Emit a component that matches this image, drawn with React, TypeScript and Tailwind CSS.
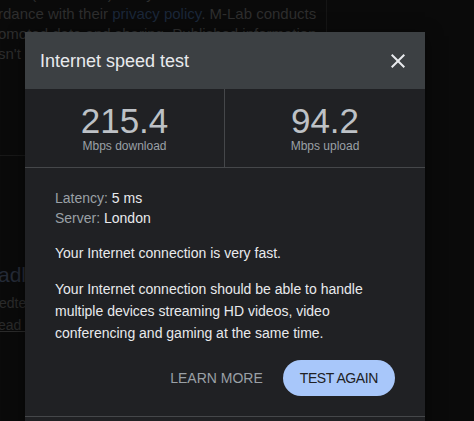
import React from "react";

const font = { fontFamily: '"Liberation Sans", Arial, sans-serif' };

export default function App() {
  return (
    <div
      className="relative h-[421px] w-[474px] overflow-hidden bg-[#0a0a0a]"
      style={font}
    >
      {/* background page */}
      <div className="w-[327px] h-[421px] border-r border-[#151515]">
        <div className="mt-[-16px] h-[172px] border-b border-[#181818] text-[15px] leading-5 text-[#2e2e2e] whitespace-nowrap">
          <div className="ml-[-2px]">data (IP address) and y</div>
          <div className="ml-[-2px]">
            rdance with their <span className="text-[#1b2739]">privacy policy</span>. M-Lab conducts
          </div>
          <div className="ml-[-2px]">omoted data and sharing. Published information</div>
          <div className="ml-[-2px]">sn't identify you</div>
        </div>
        <div className="mt-[105px] text-[21px] leading-[28px] text-[#252b37] whitespace-nowrap ml-[-2px]">
          adload speed
        </div>
        <div className="mt-[4px] text-[14px] leading-5 text-[#2b2b2b] whitespace-nowrap ml-[-1px]">
          edtest
        </div>
        <div className="mt-[2px] text-[14px] leading-5 text-[#2b2b2b] whitespace-nowrap ml-[-2px] underline">
          ead more
        </div>
      </div>

      {/* dialog */}
      <div className="absolute left-[25px] top-[32px] w-[400px] bg-[#202124] shadow-[0_4px_16px_rgba(0,0,0,0.5)]">
        <div className="flex h-[57px] items-center justify-between bg-[#3c4043] pl-[15px] pr-[15px]">
          <div className="text-[18px] leading-6 text-[#e8eaed]">Internet speed test</div>
          <button className="flex h-6 w-6 items-center justify-center text-[#e8eaed]">
            <svg viewBox="0 0 24 24" width="24" height="24" fill="currentColor">
              <path d="M19 6.41L17.59 5 12 10.59 6.41 5 5 6.41 10.59 12 5 17.59 6.41 19 12 13.41 17.59 19 19 17.59 13.41 12z" />
            </svg>
          </button>
        </div>

        <div className="grid grid-cols-2 border-b border-[#45474a]">
          <div className="flex flex-col items-center border-r border-[#45474a] pt-[15px] pb-[13px]">
            <div className="text-[35px] leading-[34px] text-[#bdc1c6]">215.4</div>
            <div className="text-[12px] leading-4 text-[#9aa0a6]">Mbps download</div>
          </div>
          <div className="flex flex-col items-center pt-[15px] pb-[13px]">
            <div className="text-[35px] leading-[34px] text-[#bdc1c6]">94.2</div>
            <div className="text-[12px] leading-4 text-[#9aa0a6]">Mbps upload</div>
          </div>
        </div>

        <div className="px-[30px] pt-[20px] pb-[20px]">
          <div className="text-[14px] leading-5">
            <div>
              <span className="text-[#9aa0a6]">Latency: </span>
              <span className="text-[#e8eaed]">5 ms</span>
            </div>
            <div>
              <span className="text-[#9aa0a6]">Server: </span>
              <span className="text-[#e8eaed]">London</span>
            </div>
          </div>
          <p className="mt-[14px] text-[14px] leading-[22px] text-[#e8eaed]">
            Your Internet connection is very fast.
          </p>
          <p className="mt-[14px] text-[14px] leading-[22px] text-[#e8eaed]">
            Your Internet connection should be able to handle multiple devices streaming HD videos,
            video conferencing and gaming at the same time.
          </p>
          <div className="mt-4 flex items-center justify-end gap-5">
            <button className="text-[14px] leading-5 text-[#9aa0a6]">LEARN MORE</button>
            <button className="h-9 rounded-full bg-[#a8c7fa] px-[17px] text-[14px] leading-5 tracking-[-0.4px] text-[#202124]">
              TEST AGAIN
            </button>
          </div>
        </div>
        <div className="h-[40px] border-t border-[#45474a]" />
      </div>
    </div>
  );
}
